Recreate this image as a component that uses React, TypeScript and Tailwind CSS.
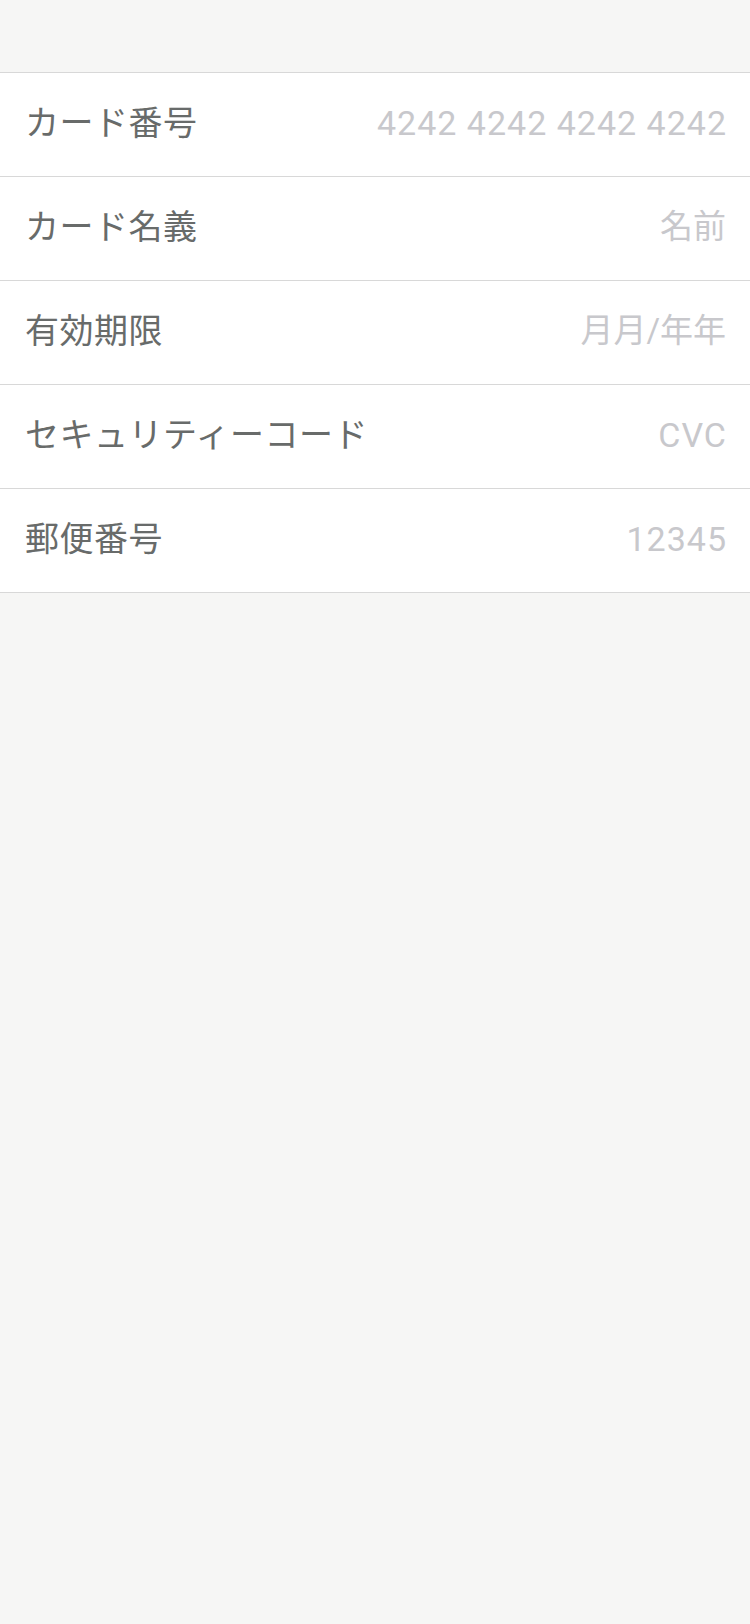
const rows = [
  { label: "カード番号", placeholder: "4242 4242 4242 4242", latin: true },
  { label: "カード名義", placeholder: "名前", latin: false },
  { label: "有効期限", placeholder: "月月/年年", latin: false },
  { label: "セキュリティーコード", placeholder: "CVC", latin: true },
  { label: "郵便番号", placeholder: "12345", latin: true },
];

export default function App() {
  return (
    <div
      className="min-h-[1624px] w-[750px] bg-[#f6f6f5] pt-[72px]"
      style={{ fontFamily: '"Roboto", "Noto Sans CJK JP", sans-serif' }}
    >
      <div className="border-t border-[#d8d8d8] bg-white">
        {rows.map((row) => (
          <div
            key={row.label}
            className="flex h-[104px] items-center justify-between border-b border-[#d8d8d8] pb-[3px] pl-[25px] pr-[23px]"
          >
            <span className="text-[34px] tracking-[0.5px] text-[#686b6a]">{row.label}</span>
            {row.latin ? (
              <span className="text-[34px] tracking-[1px] text-[#c8c8cc]">{row.placeholder}</span>
            ) : (
              <span className="pr-[1px] text-[33px] text-[#c8c8cc]">{row.placeholder}</span>
            )}
          </div>
        ))}
      </div>
    </div>
  );
}
